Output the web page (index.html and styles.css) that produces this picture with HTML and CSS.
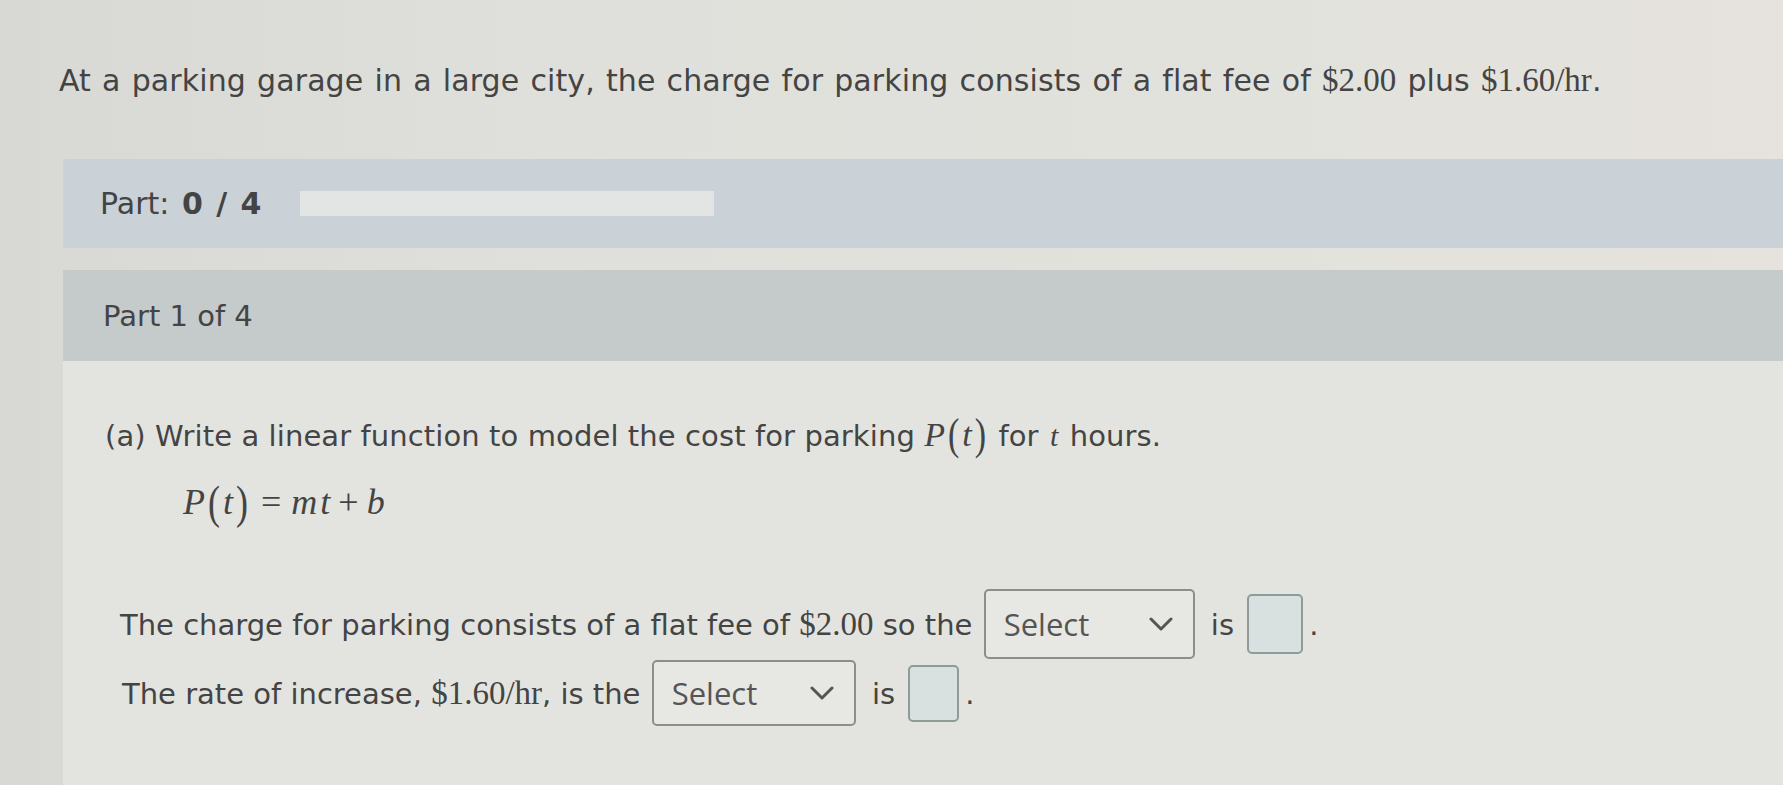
FILE: index.html
```html
<!DOCTYPE html>
<html lang="en">
<head>
<meta charset="utf-8">
<title>Parking garage</title>
<link rel="stylesheet" href="styles.css">
</head>
<body>
<div class="page">
  <p class="intro">At a parking garage in a large city, the charge for parking consists of a flat fee of <span class="num">$2.00</span> plus <span class="num">$1.60/hr</span>.</p>
  <div class="panel">
    <div class="progress-row">
      <span class="part-label">Part: <b>0 / 4</b></span>
      <span class="track"></span>
    </div>
    <div class="part-head">Part 1 of 4</div>
    <div class="part-body">
      <p class="question">(a) Write a linear function to model the cost for parking <span class="math"><i>P</i><span class="paren">(</span><i>t</i><span class="paren">)</span></span> for <i class="var">t</i> hours.</p>
      <p class="equation"><span class="math"><i>P</i><span class="paren">(</span><i>t</i><span class="paren">)</span><span class="op">=</span><i>m</i><i>t</i><span class="op op-plus">+</span><i>b</i></span></p>
      <p class="line line-one">The charge for parking consists of a flat fee of <span class="num">$2.00</span> so the <span class="select">Select<svg class="chev" viewBox="0 0 24 14" width="24" height="14"><polyline points="2,2 12,12 22,2"/></svg></span> is <span class="box box-one"></span>.</p>
      <p class="line line-two">The rate of increase, <span class="num">$1.60/hr</span>, is the <span class="select select-two">Select<svg class="chev" viewBox="0 0 24 14" width="24" height="14"><polyline points="2,2 12,12 22,2"/></svg></span> is <span class="box"></span>.</p>
    </div>
  </div>
</div>
</body>
</html>
```

FILE: styles.css
```css
html, body {
  margin: 0;
  padding: 0;
}
body {
  width: 1783px;
  height: 785px;
  overflow: hidden;
  background: linear-gradient(90deg, #d8d9d4 0%, #dfe0db 30%, #e2e2dd 70%, #e6e2de 100%);
  font-family: "DejaVu Sans", Verdana, sans-serif;
  color: #444444;
}
.page {
  padding-top: 62px;
}
.intro {
  margin: 0 0 0 59px;
  font-size: 30px;
  line-height: 36px;
  letter-spacing: 0.1px;
  word-spacing: 1.5px;
  white-space: nowrap;
}
.num {
  font-family: "Liberation Serif", "Times New Roman", serif;
  font-size: 33px;
  letter-spacing: 0;
}
.panel {
  margin-top: 60px;
  margin-left: 63px;
  display: flex;
  flex-direction: column;
}
.progress-row {
  height: 89px;
  background: #cad2d8;
  display: flex;
  align-items: center;
  padding-left: 37px;
}
.part-label {
  font-size: 30px;
  width: 200px;
  word-spacing: 3px;
}
.part-label b {
  font-weight: bold;
}
.track {
  width: 414px;
  height: 25px;
  background: #e2e5e4;
}
.part-head {
  margin-top: 22px;
  height: 91px;
  background: #c5cacb;
  display: flex;
  align-items: center;
  padding-left: 40px;
  font-size: 29px;
}
.part-body {
  box-sizing: border-box;
  height: 425px;
  background: #e3e4df;
  padding: 54px 0 0 42px;
}
.question {
  margin: 0;
  font-size: 29px;
  line-height: 40px;
  letter-spacing: 0.1px;
  white-space: nowrap;
}
.math {
  font-family: "Liberation Serif", "Times New Roman", serif;
  font-size: 34px;
  letter-spacing: 0;
}
.math i, .var {
  font-family: "Liberation Serif", "Times New Roman", serif;
  font-style: italic;
}
.math i + i {
  margin-left: 3px;
}
.var {
  font-size: 30px;
  margin: 0 2px;
}
.paren {
  display: inline-block;
  transform: scaleY(1.3);
  margin: 0 3px;
}
.equation {
  margin: 24px 0 0 78px;
  line-height: 44px;
}
.equation .math {
  font-size: 36px;
}
.op {
  margin: 0 10px;
}
.op-plus {
  margin: 0 8px;
}
.line {
  margin: 0;
  font-size: 29px;
  white-space: nowrap;
}
.line-one {
  margin-top: 58px;
  margin-left: 15px;
  line-height: 70px;
}
.line-two {
  margin-left: 17px;
  line-height: 66px;
}
.select {
  display: inline-flex;
  vertical-align: middle;
  align-items: center;
  justify-content: space-between;
  box-sizing: border-box;
  width: 211px;
  height: 70px;
  margin: -6px 7px 0 2px;
  padding: 0 20px 0 18px;
  border: 2px solid #8e8e89;
  border-radius: 5px;
  background: #e7e7e3;
  font-family: "Open Sans", "Noto Sans", sans-serif;
  font-size: 31px;
  letter-spacing: 0;
  color: #555555;
}
.select-two {
  width: 204px;
  height: 66px;
}
.chev {
  fill: none;
  stroke: #555555;
  stroke-width: 3;
  stroke-linecap: round;
  stroke-linejoin: round;
}
.box {
  display: inline-block;
  vertical-align: middle;
  box-sizing: border-box;
  width: 51px;
  height: 57px;
  margin: -6px 6px 0 4px;
  border: 2px solid #8d9b99;
  border-radius: 5px;
  background: #d9e1e0;
}
.box-one {
  width: 56px;
  height: 60px;
}
```
